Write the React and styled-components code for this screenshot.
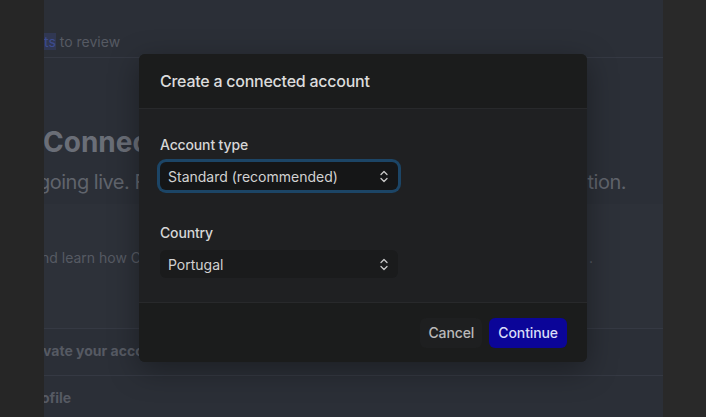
import styled, { createGlobalStyle } from 'styled-components';

const GlobalStyle = createGlobalStyle`
  html, body {
    margin: 0;
    padding: 0;
    background: #262626;
  }
  body {
    font-family: Inter, "Noto Sans", "Liberation Sans", sans-serif;
    -webkit-font-smoothing: antialiased;
  }
`;

const Screen = styled.div`
  position: relative;
  display: flex;
  width: 706px;
  height: 417px;
  overflow: hidden;
`;

const Strip = styled.div`
  width: ${(p) => p.w}px;
  flex-shrink: 0;
  background: ${(p) => p.bg};
`;

const Page = styled.div`
  flex: 1;
  display: flex;
  flex-direction: column;
  background: #2b2f37;
  overflow: hidden;

  & > * {
    flex-shrink: 0;
  }
`;

const TopBar = styled.div`
  height: 58px;
  box-sizing: border-box;
  display: flex;
  align-items: flex-end;
  padding-bottom: 5px;
  border-bottom: 1px solid #353943;
`;

const BgText = styled.span`
  display: block;
  white-space: nowrap;
  font-size: ${(p) => p.size || 14}px;
  line-height: ${(p) => p.lh || 20}px;
  font-weight: ${(p) => (p.bold ? 700 : 400)};
  letter-spacing: ${(p) => p.ls || 0}px;
  color: ${(p) => p.color || '#565a63'};
  margin-left: ${(p) => p.shift || 0}px;
`;

const LinkText = styled.span`
  color: #3d4c90;
  background: #303752;
`;

const Hero = styled.div`
  display: flex;
  flex-direction: column;
  gap: 9px;
  padding-top: 67px;
`;

const SplitLine = styled.div`
  display: flex;
  justify-content: space-between;
  padding-right: ${(p) => p.pr}px;
`;

const Band = styled.div`
  margin-top: 8px;
  height: 125px;
  box-sizing: border-box;
  padding-top: 44px;
  background: #2d3139;
  border-bottom: 1px solid #353943;
`;

const ListRow = styled.div`
  height: 47px;
  box-sizing: border-box;
  padding-top: 12px;
  border-bottom: ${(p) => (p.last ? 'none' : '1px solid #353943')};
`;

const Modal = styled.div`
  position: absolute;
  left: 139px;
  top: 54px;
  width: 448px;
  height: 308px;
  display: flex;
  flex-direction: column;
  border-radius: 6px;
  overflow: hidden;
  background: #1f2022;
  box-shadow: 0 8px 30px rgba(0, 0, 0, 0.35);
`;

const ModalHeader = styled.div`
  height: 55px;
  box-sizing: border-box;
  display: flex;
  align-items: center;
  padding: 0 21px;
  background: #1b1c1c;
  border-bottom: 1px solid #28292b;
`;

const Title = styled.h2`
  margin: 0;
  font-size: 16px;
  font-weight: 500;
  letter-spacing: -0.25px;
  color: #dcdcdc;
  line-height: 24px;
`;

const ModalBody = styled.div`
  flex: 1;
  display: flex;
  flex-direction: column;
  gap: 33px;
  padding: 26px 21px 0;
`;

const Field = styled.div`
  display: flex;
  flex-direction: column;
  gap: 7px;
`;

const Label = styled.label`
  font-size: 14px;
  line-height: 20px;
  font-weight: 500;
  letter-spacing: -0.15px;
  color: #d6d6d6;
`;

const Select = styled.div`
  width: 238px;
  height: 28px;
  box-sizing: border-box;
  display: flex;
  align-items: center;
  justify-content: space-between;
  padding: 0 10px 0 8px;
  border-radius: 6px;
  background: ${(p) => (p.focused ? '#151617' : '#1a1b1c')};
  box-shadow: ${(p) => (p.focused ? '0 0 0 3px #1c4566' : 'none')};
  font-size: 14px;
  color: #d2d2d2;
`;

const ModalFooter = styled.div`
  height: 60px;
  box-sizing: border-box;
  display: flex;
  align-items: center;
  justify-content: flex-end;
  gap: 7px;
  padding: 0 20px;
  background: #1b1c1c;
  border-top: 1px solid #28292b;
`;

const Button = styled.button`
  height: 30px;
  padding: 0 ${(p) => (p.primary ? 9 : 8)}px;
  border: none;
  border-radius: 6px;
  font-family: inherit;
  font-size: 14px;
  font-weight: 500;
  letter-spacing: -0.1px;
  background: ${(p) => (p.primary ? '#0b0598' : '#1e1f20')};
  color: ${(p) => (p.primary ? '#d9dcf7' : '#b9b9b9')};
`;

const UpDown = () => (
  <svg width="8" height="13" viewBox="0 0 8 13" fill="none">
    <path d="M1 4.5 4 1.5 7 4.5M1 8.5 4 11.5 7 8.5" stroke="#c8c8c8" strokeWidth="1.3" strokeLinecap="round" strokeLinejoin="round" />
  </svg>
);

export default function App() {
  return (
    <>
      <GlobalStyle />
      <Screen>
        <Strip w={44} bg="#262626" />
        <Page>
          <TopBar>
            <BgText>
              <LinkText>ts</LinkText> to review
            </BgText>
          </TopBar>
          <Hero>
            <BgText size={28} lh={34} bold color="#6a6e77" shift={-1}>
              Connected accounts
            </BgText>
            <SplitLine pr={37}>
              <BgText size={20} lh={28} ls={-0.5} color="#60646c" shift={-6}>
                going live. Follow the steps below
              </BgText>
              <BgText size={20} lh={28} ls={-0.5} color="#60646c">
                tion.
              </BgText>
            </SplitLine>
          </Hero>
          <Band>
            <SplitLine pr={70}>
              <BgText shift={-3}>nd learn how Connect works for your platform</BgText>
              <BgText>.</BgText>
            </SplitLine>
          </Band>
          <ListRow>
            <BgText bold shift={-1}>vate your account</BgText>
          </ListRow>
          <ListRow last>
            <BgText bold shift={-3}>ofile</BgText>
          </ListRow>
        </Page>
        <Strip w={43} bg="#292929" />

        <Modal>
          <ModalHeader>
            <Title>Create a connected account</Title>
          </ModalHeader>
          <ModalBody>
            <Field>
              <Label>Account type</Label>
              <Select focused>
                <span>Standard (recommended)</span>
                <UpDown />
              </Select>
            </Field>
            <Field>
              <Label>Country</Label>
              <Select>
                <span>Portugal</span>
                <UpDown />
              </Select>
            </Field>
          </ModalBody>
          <ModalFooter>
            <Button>Cancel</Button>
            <Button primary>Continue</Button>
          </ModalFooter>
        </Modal>
      </Screen>
    </>
  );
}
